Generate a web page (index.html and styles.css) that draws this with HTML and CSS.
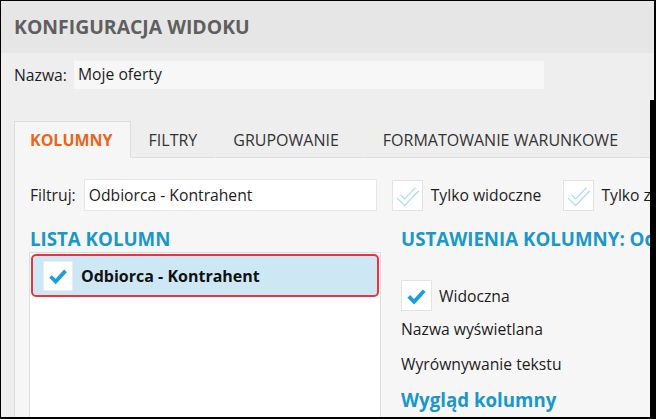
FILE: index.html
```html
<!DOCTYPE html>
<html lang="pl">
<head>
<meta charset="utf-8">
<title>Konfiguracja widoku</title>
<link rel="stylesheet" href="styles.css">
</head>
<body>
<div class="window">
  <header class="title-bar">KONFIGURACJA WIDOKU</header>
  <div class="name-row">
    <span class="label">Nazwa:</span>
    <div class="field name-field">Moje oferty</div>
  </div>
  <div class="body">
    <nav class="tabs">
      <div class="tab active">KOLUMNY</div>
      <div class="tab">FILTRY</div>
      <div class="tab tab-wide">GRUPOWANIE</div>
      <div class="tab">FORMATOWANIE WARUNKOWE</div>
      <div class="tab-fill"></div>
    </nav>
    <div class="panel">
      <div class="filter-row">
        <span class="label">Filtruj:</span>
        <div class="field filter-field">Odbiorca - Kontrahent</div>
        <span class="check hollow">
          <svg viewBox="0 0 30 30" width="30" height="30"><path d="M6 16.5 L12 22.5 L25 9" fill="none" stroke="#a9dcf0" stroke-width="6"/><path d="M6 16.5 L12 22.5 L25 9" fill="none" stroke="#fff" stroke-width="3.5"/></svg>
        </span>
        <span class="check-label">Tylko widoczne</span>
        <span class="check hollow second">
          <svg viewBox="0 0 30 30" width="30" height="30"><path d="M6 16.5 L12 22.5 L25 9" fill="none" stroke="#a9dcf0" stroke-width="6"/><path d="M6 16.5 L12 22.5 L25 9" fill="none" stroke="#fff" stroke-width="3.5"/></svg>
        </span>
        <span class="check-label second-label">Tylko zaznaczone</span>
      </div>
      <div class="columns">
        <section class="list-col">
          <h2 class="section-title">LISTA KOLUMN</h2>
          <div class="list">
            <div class="list-item selected">
              <span class="check solid">
                <svg viewBox="0 0 30 30" width="30" height="30"><path d="M7 15.5 L12.5 21 L23 9.5" fill="none" stroke="#1a9ee0" stroke-width="4"/></svg>
              </span>
              <span class="item-text">Odbiorca - Kontrahent</span>
            </div>
          </div>
        </section>
        <section class="settings-col">
          <h2 class="section-title">USTAWIENIA KOLUMNY: Odbiorca - Kontrahent</h2>
          <div class="visible-row">
            <span class="check solid">
              <svg viewBox="0 0 30 30" width="30" height="30"><path d="M7 15.5 L12.5 21 L23 9.5" fill="none" stroke="#1a9ee0" stroke-width="4"/></svg>
            </span>
            <span class="check-label">Widoczna</span>
          </div>
          <div class="setting">Nazwa wyświetlana</div>
          <div class="setting">Wyrównywanie tekstu</div>
          <h3 class="sub-title">Wygląd kolumny</h3>
        </section>
      </div>
    </div>
  </div>
</div>
</body>
</html>
```

FILE: styles.css
```css
* { box-sizing: border-box; margin: 0; padding: 0; }
html, body { background: #000; }
body {
  width: 656px;
  height: 419px;
  overflow: hidden;
  font-family: "Open Sans", "Noto Sans", sans-serif;
  color: #1d1d1d;
  font-size: 15.7px;
}
.window {
  margin: 1px 0 0 1px;
  width: 653px;
  height: 416px;
  display: flex;
  flex-direction: column;
  overflow: hidden;
}
.title-bar {
  height: 52px;
  flex: none;
  background: #e6e6e6;
  padding: 0 0 2px 13px;
  display: flex;
  align-items: center;
  font-weight: 700;
  font-size: 19.4px;
  color: #5f5f5f;
  white-space: nowrap;
}
.name-row {
  height: 47px;
  flex: none;
  background: #eeeeee;
  padding: 8px 0 0 13px;
  display: flex;
  align-items: flex-start;
}
.name-row .label { line-height: 28px; width: 60px; flex: none; }
.field {
  height: 28px;
  line-height: 26px;
  padding-left: 4px;
  white-space: nowrap;
  flex: none;
}
.name-field { width: 470px; background: #f7f7f7; }
.body {
  flex: 1;
  width: 649px;
  background: #eeeeee;
  padding: 21px 0 0 13px;
  display: flex;
  flex-direction: column;
  min-height: 0;
}
.tabs { display: flex; height: 37px; flex: none; }
.tab {
  padding: 2px 17px 0;
  line-height: 33px;
  font-size: 16px;
  color: #333;
  border: 1px solid transparent;
  border-bottom-color: #dcdcdc;
  white-space: nowrap;
  flex: none;
}
.tab.tab-wide { padding-right: 25px; }
.tab.active {
  padding-left: 15px;
  background: #f6f6f6;
  border-color: #dcdcdc;
  border-bottom-color: #f6f6f6;
  color: #e8661c;
  font-weight: 700;
}
.tab-fill { flex: 1; border-bottom: 1px solid #dcdcdc; }
.panel {
  flex: 1;
  background: #f6f6f6;
  border-left: 1px solid #dcdcdc;
  padding: 21px 0 0 15px;
  display: flex;
  flex-direction: column;
  min-height: 0;
  overflow: hidden;
}
.filter-row {
  display: flex;
  align-items: center;
  height: 32px;
  flex: none;
  white-space: nowrap;
}
.filter-row > * { flex: none; }
.filter-field {
  margin-left: 8px;
  width: 293px;
  height: 32px;
  line-height: 30px;
  background: #fff;
  border: 1px solid #e6e6e6;
}
.check {
  width: 31px;
  height: 31px;
  flex: none;
  background: #fff;
  border: 1px solid #e3e3e3;
  display: flex;
  align-items: center;
  justify-content: center;
}
.filter-row .check { margin-left: 15px; }
.filter-row .check.second { margin-left: 22px; }
.check-label { margin-left: 8px; }
.check-label.second-label { margin-left: 7px; }
.columns { display: flex; margin-top: 16px; flex: 1; min-height: 0; }
.section-title {
  font-size: 18.7px;
  font-weight: 700;
  color: #1b98c7;
  line-height: 24px;
  white-space: nowrap;
}
.list-col { width: 351px; flex: none; display: flex; flex-direction: column; }
.list {
  margin: 1px 0 0 -1px;
  flex: 1;
  background: #fff;
  border: 1px solid #dcdcdc;
  border-bottom: none;
  padding: 1px 1px 0 1px;
}
.list-item {
  height: 43px;
  display: flex;
  align-items: center;
  border-radius: 5px;
}
.list-item.selected {
  background: #cde8f4;
  border: 2px solid #e8353c;
  padding-left: 10px;
}
.list-item .check { width: 30px; height: 30px; border-color: #e6eef2; }
.item-text { margin-left: 8px; font-weight: 700; font-size: 16px; color: #111; }
.settings-col { margin-left: 20px; flex: 1; min-width: 0; overflow: hidden; }
.visible-row { display: flex; align-items: center; margin-top: 29px; white-space: nowrap; }
.visible-row .check-label { margin-left: 7px; }
.setting { line-height: 22px; white-space: nowrap; margin-top: 13px; }
.visible-row + .setting { margin-top: 7px; }
.sub-title {
  margin-top: 13px;
  font-size: 18.7px;
  font-weight: 700;
  color: #1b98c7;
  line-height: 24px;
  white-space: nowrap;
}
```
